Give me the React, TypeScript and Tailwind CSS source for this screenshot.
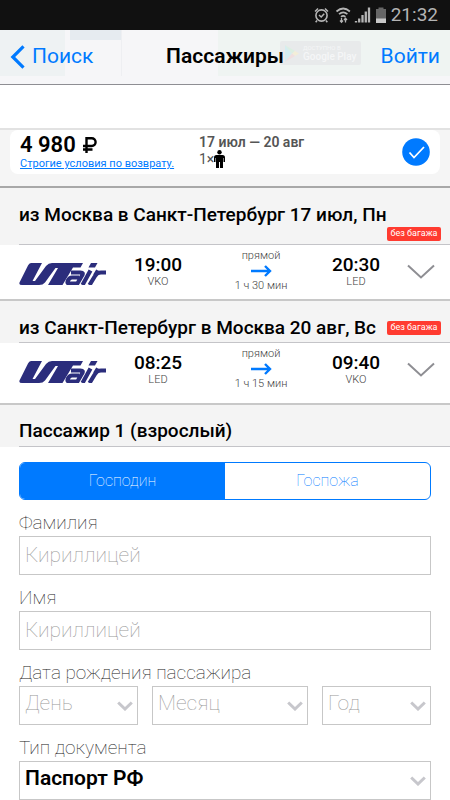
import { useState, type ReactNode } from "react";

const blue = "text-[#007aff]";

function StatusBar() {
  return (
    <div className="flex h-[30px] items-center justify-end bg-[#111111] pr-3 text-[#b4b4b4]">
      <svg width="78" height="20" viewBox="312 5 78 20" fill="none" stroke="currentColor" aria-hidden="true">
        <circle cx="320.5" cy="15.5" r="5.6" strokeWidth="1.6" />
        <path d="M318 15l2.200 2 3-3.200M314 11.500l3-3M327 11.500l-3-3M316 20.500l-1.300 1.800M325 20.500l1.300 1.800" strokeWidth="1.500" />
        <path d="M335.500 11.500q6.700-6 13.400 0M338 14.200q4.200-3.600 8.400 0M340 16.800q2.200-1.800 4.400 0" strokeWidth="1.700" />
        <path d="M340.500 18v4M339 20.500l1.500 1.700 1.500-1.700M344.500 22.500v-4M343 20l1.500-1.700L346 20" strokeWidth="1.300" />
        <path d="M355 22.500v-1.500M358.200 22.500v-4M361.500 22.500v-7.500M364.800 22.500V11.500M368 22.500V7.500" strokeWidth="2.300" />
        <path d="M377.500 7.500h5V9h2.500v14h-10V9h2.500z" fill="#666" stroke="none" />
        <path d="M375 18.500h10V23h-10z" fill="#c8c8c8" stroke="none" />
      </svg>
      <span className="text-[19px] leading-[30px]">21:32</span>
    </div>
  );
}

function HeaderBackdrop() {
  return (
    <div aria-hidden="true" className="absolute inset-x-0 top-0 flex h-[46px]">
      <div className="w-[65px] bg-[#eef2f3]" />
      <div className="ml-[5px] h-full w-[52px] border-r border-[#eeeff2]">
        <div className="h-[10px] bg-[#e6ebf0]" />
      </div>
      <div className="flex-1" />
      <div className="flex w-[232px] items-center bg-[#eff4f2] pl-[62px]">
        <div className="flex h-6 w-[81px] items-center gap-1 rounded-[2px] bg-[#e8eaeb] pl-[5px] text-[#f5f6f7]">
          <svg width="14" height="17" viewBox="0 0 14 17">
            <path d="M0 0l7 8.500L0 17z" fill="#d5edf0" />
            <path d="M0 0l10 6-3 2.500z" fill="#dcefe2" />
            <path d="M10 6l4 2.500-4 2.500-3-2.500z" fill="#f3eed8" />
            <path d="M0 17l10-6-3-2.500z" fill="#f0dfe0" />
          </svg>
          <div className="whitespace-nowrap">
            <div className="text-[6px] leading-[7px]">ДОСТУПНО В</div>
            <div className="text-[10px] font-medium leading-[11px]">Google Play</div>
          </div>
        </div>
      </div>
    </div>
  );
}

function Header() {
  return (
    <header className="relative h-[55px] border-b border-[#8e8e93] bg-[#f6f6f8]">
      <HeaderBackdrop />
      <div className="relative grid h-full grid-cols-[1fr_auto_1fr] items-center px-[10px] text-[21px]">
        <button type="button" className={`flex items-center gap-[7px] justify-self-start ${blue}`}>
          <svg width="15" height="24" viewBox="0 0 15 24" fill="none" stroke="currentColor" strokeWidth="3.200" aria-hidden="true">
            <path d="M13.500 1.300L2.800 12l10.700 10.700" />
          </svg>
          Поиск
        </button>
        <h1 className="text-[21px] font-semibold">Пассажиры</h1>
        <button type="button" className={`justify-self-end ${blue}`}>Войти</button>
      </div>
    </header>
  );
}

function Summary() {
  return (
    <section className="mt-[43px] border-t-2 border-b-2 border-t-[#e2e2e2] border-b-[#a8a8a8] bg-[#f5f5f5] px-[10px] pb-[12px]">
      <div className="flex h-[44px] items-start rounded-lg bg-white px-[10px]">
        <div className="w-[179px]">
          <div className="flex h-7 items-center gap-[7px] pt-[2px] text-[22px] font-semibold leading-[26px]">
            4 980
            <svg width="14" height="16" viewBox="0 0 14 16" fill="none" stroke="currentColor" strokeWidth="2.400" role="img" aria-label="руб.">
              <path d="M3.500 16V1.200h5.200a3.600 3.600 0 0 1 0 7.800H0M0 12.500h9.500" />
            </svg>
          </div>
          <a href="#conditions" className={`block whitespace-nowrap text-[11px] leading-3 underline ${blue}`}>
            Строгие условия по возврату.
          </a>
        </div>
        <div className="flex-1 pt-[4px] text-[14px] leading-4 text-[#555]">
          <div className="font-semibold">17 июл — 20 авг</div>
          <div className="flex items-center">
            1×
            <svg width="11" height="18" viewBox="0 0 11 18" fill="#000" aria-hidden="true">
              <circle cx="5.500" cy="2.200" r="2.200" />
              <path d="M2.500 5h6Q11 5 11 7.500V12H9.500V8H9v10H6v-6H5v6H2V8h-.5v4H0V7.500Q0 5 2.500 5z" />
            </svg>
          </div>
        </div>
        <svg className="mt-[8px]" width="28" height="28" viewBox="0 0 28 28" fill="none" aria-hidden="true">
          <circle cx="14" cy="14" r="13.800" fill="#007aff" />
          <path d="M7.500 14.500l4.500 5L22 9" stroke="#fff" strokeWidth="1.800" />
        </svg>
      </div>
    </section>
  );
}

function UtairLogo() {
  return (
    <svg width="88" height="22" viewBox="0 0 88 22" fill="#2b2d7c" role="img" aria-label="UTair">
      <path d="M12 0H23L13.500 18H16L27 3Q29.500 0 33 0H64L61.500 4.500H54L43.500 22H29L39 5H36.500L26 19.500Q24 22 20 22H3Q-1 22 1 18.500L9 2.500Q10 0 12 0z" />
      <path fill="none" stroke="#2b2d7c" strokeWidth="4.200" d="M52 9.500h9.500q3.500 0 1.500 3L57.500 22M60 14.500h-7q-2.500 0-4 3t1.500 3h7M71.500 7.500L63.500 22M87 9.500h-5q-4 0-6 3.500L70.500 22M79 7.500l-3 5" />
      <path d="M72 0h6.500L76 4.500h-6.500z" />
    </svg>
  );
}

type Leg = { title: string; from: string; fromCode: string; to: string; toCode: string; duration: string };

function Stop({ time, code }: { time: string; code: string }) {
  return (
    <div className="w-[66px] pt-[9px] text-center">
      <div className="text-[19px] font-medium leading-[22px]">{time}</div>
      <div className="text-[11px] font-light leading-3 text-[#444]">{code}</div>
    </div>
  );
}

function SectionHead({ children }: { children: ReactNode }) {
  return <div className="bg-[#f4f4f4] pl-[19px]">{children}</div>;
}

function Flight({ leg, first }: { leg: Leg; first?: boolean }) {
  return (
    <section className="border-b-2 border-[#c8c8c8]">
      <SectionHead>
        <div className={`flex items-start justify-between border-b border-[#c4c4c8] pr-[9px] ${first ? "h-[57px]" : "h-[42px]"}`}>
          <h2 className="whitespace-nowrap pt-[16px] text-[19px] font-medium leading-[22px]">{leg.title}</h2>
          <span className={`h-[14px] w-[54px] shrink-0 rounded-[2px] bg-[#ff3b30] text-center text-[9px] leading-3 text-white ${first ? "mt-[39px]" : "mt-[20px]"}`}>
            без багажа
          </span>
        </div>
      </SectionHead>
      <div className={`flex items-start pl-[19px] pr-[15px] ${first ? "h-[54px]" : "h-[60px]"}`}>
        <div className="mr-[18px] pt-[18px]"><UtairLogo /></div>
        <Stop time={leg.from} code={leg.fromCode} />
        <div className="flex flex-1 flex-col items-center pl-2 pt-[5px] text-[11px] font-light leading-3 text-[#444]">
          <span>прямой</span>
          <svg className="my-[3px]" width="21" height="12" viewBox="0 0 21 12" fill="none" stroke="#007aff" strokeWidth="2.400" aria-hidden="true">
            <path d="M0 6h19M14 1l5 5-5 5" />
          </svg>
          <span>{leg.duration}</span>
        </div>
        <Stop time={leg.to} code={leg.toCode} />
        <button type="button" aria-label="Подробнее" className="ml-[18px] mt-[19px]">
          <svg width="28" height="16" viewBox="0 0 28 16" fill="none" stroke="#8e8e93" strokeWidth="2">
            <path d="M1 1.500l13 12 13-12" />
          </svg>
        </button>
      </div>
    </section>
  );
}

const labelText = "block text-[19px] font-thin leading-[26px] text-[#222]";

function TextField({ id, label }: { id: string; label: string }) {
  return (
    <div>
      <label htmlFor={id} className={labelText}>{label}</label>
      <input id={id} placeholder="Кириллицей" className="block h-[39px] w-full border border-[#c7c7c7] px-[5px] pb-[2px] text-[21px] font-thin outline-none placeholder:text-[#999]" />
    </div>
  );
}

function SelectField({ id, label, option, strong }: { id: string; label?: string; option: string; strong?: boolean }) {
  return (
    <div className="grid grid-cols-1 items-center">
      <select id={id} aria-label={label} className={`col-start-1 row-start-1 block h-[39px] w-full appearance-none border border-[#c7c7c7] bg-white px-[5px] pb-[3px] text-[21px] ${strong ? "font-semibold text-black" : "font-thin text-[#999]"}`}>
        <option>{option}</option>
      </select>
      <svg className="pointer-events-none col-start-1 row-start-1 mr-[5px] justify-self-end" width="16" height="10" viewBox="0 0 16 10" fill="none" stroke="#c7c7cc" strokeWidth="3" aria-hidden="true">
        <path d="M1.200 1.500L8 8l6.800-6.500" />
      </svg>
    </div>
  );
}

const legs: Leg[] = [
  { title: "из Москва в Санкт-Петербург 17 июл, Пн", from: "19:00", fromCode: "VKO", to: "20:30", toCode: "LED", duration: "1 ч 30 мин" },
  { title: "из Санкт-Петербург в Москва 20 авг, Вс", from: "08:25", fromCode: "LED", to: "09:40", toCode: "VKO", duration: "1 ч 15 мин" },
];

export default function App() {
  const [male, setMale] = useState(true);
  return (
    <div className="h-screen overflow-hidden bg-white font-['Roboto','Liberation_Sans',sans-serif] text-black">
      <StatusBar />
      <Header />
      <main>
        <Summary />
        <Flight leg={legs[0]} first />
        <Flight leg={legs[1]} />
        <SectionHead>
          <h2 className="border-b border-[#c4c4c8] pt-[15px] pb-[4px] text-[19px] font-medium leading-[22px]">Пассажир 1 (взрослый)</h2>
        </SectionHead>
        <form className="flex flex-col gap-[10px] px-[19px] pt-[15px]">
          <div className="grid h-[38px] grid-cols-2 overflow-hidden rounded-md border border-[#007aff] text-[16px] font-thin">
            <button type="button" aria-pressed={male} onClick={() => setMale(true)} className={male ? "bg-[#007aff] text-white" : "text-[#007aff]"}>Господин</button>
            <button type="button" aria-pressed={!male} onClick={() => setMale(false)} className={male ? "text-[#007aff]" : "bg-[#007aff] text-white"}>Госпожа</button>
          </div>
          <TextField id="surname" label="Фамилия" />
          <TextField id="name" label="Имя" />
          <fieldset>
            <legend className={labelText}>Дата рождения пассажира</legend>
            <div className="grid grid-cols-[119fr_156fr_109fr] gap-[14px]">
              <SelectField id="day" label="День" option="День" />
              <SelectField id="month" label="Месяц" option="Месяц" />
              <SelectField id="year" label="Год" option="Год" />
            </div>
          </fieldset>
          <div>
            <label htmlFor="document" className={labelText}>Тип документа</label>
            <SelectField id="document" option="Паспорт РФ" strong />
          </div>
        </form>
      </main>
    </div>
  );
}
